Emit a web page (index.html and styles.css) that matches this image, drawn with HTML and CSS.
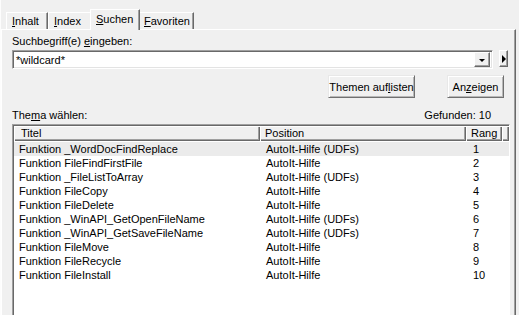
FILE: index.html
```html
<!DOCTYPE html>
<html lang="de">
<head>
  <meta charset="UTF-8">
  <title>Suchen</title>
  <link rel="stylesheet" href="styles.css">
</head>
<body>
  <div class="frame">
    <div class="edge"></div>
    <div class="main">
      <!-- Tabs -->
      <div class="tabs">
        <div class="tab tab-inhalt"><u>I</u>nhalt</div>
        <div class="tab tab-index"><u>I</u>ndex</div>
        <div class="tab tab-suchen active"><u>S</u>uchen</div>
        <div class="tab tab-fav"><u>F</u>avoriten</div>
      </div>

      <div class="panel">
        <!-- Suchbegriff -->
        <div class="label">Suchbegriff(e) <u>e</u>ingeben:</div>
        <div class="search-row">
          <div class="combo">
            <span class="combo-text">*wildcard*</span>
            <span class="combo-btn"><span class="tri-down"></span></span>
          </div>
          <span class="small-btn"><span class="tri-right"></span></span>
        </div>

        <!-- Buttons -->
        <div class="btn-row">
          <button class="btn btn-list">Themen auf<u>l</u>isten</button>
          <button class="btn btn-show">An<u>z</u>eigen</button>
        </div>

        <!-- Ergebnis -->
        <div class="result-head">
          <span>The<u>m</u>a wählen:</span>
          <span>Gefunden: 10</span>
        </div>

        <div class="list">
          <div class="list-header">
            <div class="hcell">Titel</div>
            <div class="hcell">Position</div>
            <div class="hcell">Rang</div>
            <div class="hfill"></div>
          </div>
          <div class="row first"><span>Funktion _WordDocFindReplace</span><span>AutoIt-Hilfe (UDFs)</span><span>1</span></div>
          <div class="row"><span>Funktion FileFindFirstFile</span><span>AutoIt-Hilfe</span><span>2</span></div>
          <div class="row"><span>Funktion _FileListToArray</span><span>AutoIt-Hilfe (UDFs)</span><span>3</span></div>
          <div class="row"><span>Funktion FileCopy</span><span>AutoIt-Hilfe</span><span>4</span></div>
          <div class="row"><span>Funktion FileDelete</span><span>AutoIt-Hilfe</span><span>5</span></div>
          <div class="row"><span>Funktion _WinAPI_GetOpenFileName</span><span>AutoIt-Hilfe (UDFs)</span><span>6</span></div>
          <div class="row"><span>Funktion _WinAPI_GetSaveFileName</span><span>AutoIt-Hilfe (UDFs)</span><span>7</span></div>
          <div class="row"><span>Funktion FileMove</span><span>AutoIt-Hilfe</span><span>8</span></div>
          <div class="row"><span>Funktion FileRecycle</span><span>AutoIt-Hilfe</span><span>9</span></div>
          <div class="row"><span>Funktion FileInstall</span><span>AutoIt-Hilfe</span><span>10</span></div>
        </div>
      </div>
    </div>
  </div>
</body>
</html>
```

FILE: styles.css
```css
body {
  margin: 0;
  background-color: #f0f0f0;
  font-family: "Liberation Sans", Arial, sans-serif;
  font-size: 11px;
  color: #000;
}
u {
  text-decoration: underline;
  text-underline-offset: 1px;
}
.frame {
  display: flex;
  width: 519px;
  height: 315px;
  overflow: hidden;
}
.edge {
  width: 3px;
  background-color: #c3d5ea;
  border-right: 1px solid #fdfdfd;
}
.main {
  flex: 1;
  padding-top: 9px;
  padding-right: 6px;
  display: flex;
  flex-direction: column;
}
.tabs {
  display: flex;
  align-items: flex-end;
  height: 20px;
  padding-left: 5px;
}
.tab {
  box-sizing: border-box;
  height: 17px;
  line-height: 16px;
  padding-left: 5px;
  border-top: 1px solid #fff;
  border-left: 1px solid #fff;
  border-right: 1px solid #696969;
  box-shadow: inset -1px 0 #a0a0a0;
}
.tab-inhalt {
  width: 42px;
}
.tab-index {
  width: 44px;
}
.tab-suchen {
  width: 50px;
}
.tab-fav {
  width: 56px;
}
.tab.active {
  height: 21px;
  line-height: 18px;
  margin: 0 -2px -1px -2px;
  background-color: #f0f0f0;
  position: relative;
  z-index: 1;
}
.panel {
  flex: 1;
  border-top: 1px solid #fff;
  border-left: 1px solid #fff;
  border-right: 1px solid #696969;
  box-shadow: inset -1px 0 #a0a0a0;
  padding: 4px 5px 0 10px;
}
.label {
  line-height: 14px;
}
.search-row {
  display: flex;
  align-items: flex-start;
  margin-top: 2px;
  padding-right: 2px;
}
.combo {
  flex: 1;
  height: 19px;
  box-sizing: border-box;
  display: flex;
  align-items: center;
  background-color: #fff;
  border: 1px solid;
  border-color: #a0a0a0 #fff #fff #a0a0a0;
  box-shadow: inset 1px 1px #696969, inset -1px -1px #e3e3e3;
  padding: 1px 2px 1px 3px;
}
.combo-text {
  flex: 1;
  line-height: 14px;
}
.combo-btn, .small-btn {
  display: flex;
  align-items: center;
  justify-content: center;
  box-sizing: border-box;
  background-color: #f0f0f0;
  border: 1px solid;
  border-color: #fff #696969 #696969 #fff;
  box-shadow: inset -1px -1px #a0a0a0;
}
.combo-btn {
  width: 16px;
  height: 15px;
}
.small-btn {
  width: 9px;
  height: 17px;
  margin-left: 6px;
}
.tri-down {
  border-left: 3px solid transparent;
  border-right: 3px solid transparent;
  border-top: 3px solid #000;
  margin-top: 1px;
}
.tri-right {
  border-top: 4px solid transparent;
  border-bottom: 4px solid transparent;
  border-left: 4px solid #000;
  margin-left: 1px;
}
.btn-row {
  display: flex;
  justify-content: flex-end;
  gap: 32px;
  margin-top: 6px;
  padding-right: 6px;
}
.btn {
  height: 23px;
  box-sizing: border-box;
  font-family: inherit;
  font-size: 11px;
  color: #000;
  background-color: #f0f0f0;
  border: 1px solid;
  border-color: #e8e8e8 #707070 #707070 #e8e8e8;
  box-shadow: inset 1px 1px #fff, inset -1px -1px #b8b8b8;
  padding: 0;
}
.btn-list {
  width: 87px;
}
.btn-show {
  width: 57px;
}
.result-head {
  display: flex;
  justify-content: space-between;
  line-height: 14px;
  margin-top: 10px;
  padding-right: 19px;
}
.list {
  margin-top: 2px;
  height: 230px;
  background-color: #fff;
  border: 1px solid;
  border-color: #a0a0a0 #fff #fff #a0a0a0;
  box-shadow: inset 1px 1px #696969;
  padding: 1px 0 0 1px;
}
.list-header, .row {
  display: grid;
  grid-template-columns: 246px 206px 36px 1fr;
}
.list-header {
  height: 15px;
  margin-bottom: 1px;
}
.hcell, .hfill {
  background-color: #f0f0f0;
  box-shadow: inset 1px 1px #fff, inset -1px -1px #696969, inset -2px -2px #a0a0a0;
  line-height: 15px;
  padding-left: 7px;
}
.hcell:nth-child(2) {
  padding-left: 5px;
}
.hcell:nth-child(3) {
  padding-left: 5px;
}
.row {
  height: 14px;
  line-height: 14px;
}
.row span {
  padding-left: 5px;
  white-space: nowrap;
}
.row span:nth-child(2) {
  padding-left: 6px;
}
.row span:nth-child(3) {
  padding-left: 7px;
}
.row.first {
  background-color: #ebebeb;
}
```
